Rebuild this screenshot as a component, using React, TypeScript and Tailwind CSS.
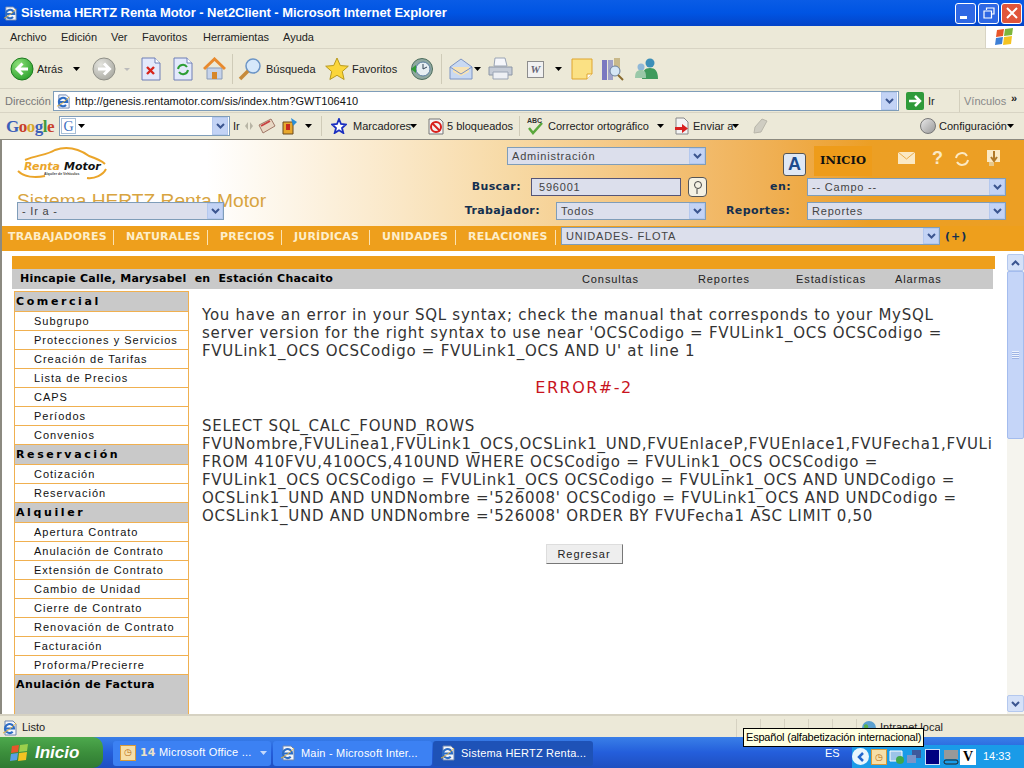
import React from "react";

const Caret = ({ c = "" }: { c?: string }) => (
  <svg width="7" height="4" viewBox="0 0 7 4" className={c}><path d="M0 0h7L3.5 4z" fill="#000" /></svg>
);

const Chevron = () => (
  <span className="flex h-full w-[16px] shrink-0 items-center justify-center border border-[#b4c8ee] bg-[#c3d3f5]">
    <svg width="9" height="7" viewBox="0 0 9 7"><path d="M1 1l3.500 3.500L8 1" stroke="#3b5590" strokeWidth="2" fill="none" /></svg>
  </span>
);

const Select = ({ label, w }: { label: string; w: string }) => (
  <div className={`${w} flex h-[18px] shrink-0 items-center border border-[#7f9db9] bg-[#dcdfec] text-[11px] tracking-[0.8px] text-[#444]`}>
    <span className="flex-1 truncate pl-[4px] font-['Liberation_Sans']">{label}</span>
    <Chevron />
  </div>
);

const IEIcon = ({ s = 16 }: { s?: number }) => (
  <svg width={s} height={s} viewBox="0 0 16 16">
    <path d="M3 1h8l3 3v11H3z" fill="#f4f6fb" stroke="#6f86b0" />
    <path d="M2.500 8.500h9.500a4.500 4.500 0 1 0-1.300 3.200" fill="none" stroke="#2c6cc4" strokeWidth="2.200" />
    <path d="M1 13C4 12 11 7 14 3" stroke="#e3b23c" strokeWidth="1" fill="none" />
  </svg>
);

const Round = ({ id, from, to, edge, dim = false }: { id: string; from: string; to: string; edge: string; dim?: boolean }) => (
  <svg width="24" height="24" viewBox="0 0 24 24">
    <defs>
      <radialGradient id={id} cx="0.35" cy="0.3" r="0.85"><stop offset="0" stopColor={from} /><stop offset="1" stopColor={to} /></radialGradient>
    </defs>
    <circle cx="12" cy="12" r="11" fill={`url(#${id})`} stroke={edge} />
    <path d={dim ? "M6 12h10M12 6.500l5.500 5.500-5.500 5.500" : "M18 12H8M12.500 6.500L7 12l5.500 5.500"} stroke="#fff" strokeWidth="3" fill="none" />
  </svg>
);

const Doc = ({ children }: { children: React.ReactNode }) => (
  <svg width="20" height="24" viewBox="0 0 20 24">
    <path d="M1 1h13l5 5v17H1z" fill="#e3e9fb" stroke="#6f7fb5" />
    <path d="M14 1v5h5" fill="#fff" stroke="#6f7fb5" />
    {children}
  </svg>
);

function TitleBar() {
  return (
    <div className="flex h-[26px] shrink-0 items-center bg-gradient-to-b from-[#0a5ce6] via-[#0054e3] to-[#0344c8] pl-[3px] pr-[2px]">
      <IEIcon s={15} />
      <span className="ml-[3px] flex-1 font-['Liberation_Sans'] text-[13px] font-bold tracking-[-0.06px] text-white">
        Sistema HERTZ Renta Motor - Net2Client - Microsoft Internet Explorer
      </span>
      <div className="flex gap-[2px]">
        <span className="flex h-[21px] w-[21px] items-end justify-center rounded-[3px] border border-white bg-[#2f68e4] pb-[4px] pr-[5px]">
          <span className="h-[3px] w-[7px] bg-white" />
        </span>
        <span className="flex h-[21px] w-[21px] items-center justify-center rounded-[3px] border border-white bg-[#2f68e4]">
          <svg width="12" height="12" viewBox="0 0 12 12"><path d="M3.500 3V1h7.500v6H9M1 4h7.500v7H1z" stroke="#fff" strokeWidth="1.200" fill="none" /></svg>
        </span>
        <span className="flex h-[21px] w-[21px] items-center justify-center rounded-[3px] border border-white bg-[#e0553a]">
          <svg width="12" height="12" viewBox="0 0 12 12"><path d="M1 1l10 10M11 1L1 11" stroke="#fff" strokeWidth="2" /></svg>
        </span>
      </div>
    </div>
  );
}

function MenuBar() {
  return (
    <div className="flex h-[23px] shrink-0 items-center justify-between border-b border-[#d8d4c4] bg-[#ece9d8] pl-[10px] font-['Liberation_Sans'] text-[11px] text-[#222]">
      <div className="flex">
        <span className="w-[51px]">Archivo</span>
        <span className="w-[50px]">Edición</span>
        <span className="w-[31px]">Ver</span>
        <span className="w-[61px]">Favoritos</span>
        <span className="w-[80px]">Herramientas</span>
        <span>Ayuda</span>
      </div>
      <div className="flex h-full w-[39px] items-center justify-center border-l border-[#d8d4c4] bg-white">
        <svg width="20" height="18" viewBox="0 0 20 18">
          <path d="M2 2l7-1-1 7-7 1z" fill="#e8562a" />
          <path d="M10 1l8-1-1 7-8 1z" fill="#7cb53c" />
          <path d="M1 10l7-1-1 7-7 1z" fill="#3d7fd6" />
          <path d="M9 9l8-1-1 8-8 1z" fill="#f4c322" />
        </svg>
      </div>
    </div>
  );
}

function ToolBar() {
  return (
    <div className="flex h-[40px] shrink-0 items-center whitespace-nowrap border-b border-[#d8d4c4] bg-[#ece9d8] pl-[10px] pt-[1px] font-['Liberation_Sans'] text-[11px] text-[#222]">
      <Round id="g1" from="#8fe07a" to="#1f9a24" edge="#1f7a20" />
      <span className="ml-[3px] w-[27px]">Atrás</span>
      <Caret c="ml-[9px]" />
      <span className="ml-[12px] flex"><Round id="g2" from="#e4e4de" to="#a4a49c" edge="#909088" dim /></span>
      <svg className="ml-[8px]" width="6" height="3" viewBox="0 0 6 3"><path d="M0 0h6L3 3z" fill="#bbb" /></svg>
      <span className="ml-[11px] flex">
        <Doc><path d="M6 10l7 7M13 10l-7 7" stroke="#d8261c" strokeWidth="2.400" /></Doc>
      </span>
      <span className="ml-[12px] flex">
        <Doc><path d="M5 12a5 5 0 0 1 9-2M15 13a5 5 0 0 1-9 2" stroke="#2c9e35" strokeWidth="2" fill="none" /></Doc>
      </span>
      <svg className="ml-[10px]" width="23" height="24" viewBox="0 0 23 24">
        <path d="M4 11h15v11H4z" fill="#c6d3ea" stroke="#8a9bb8" />
        <path d="M1 12L11.500 2 22 12" stroke="#e88a2e" strokeWidth="3" fill="none" />
        <path d="M9 15h5v7H9z" fill="#d6862a" />
      </svg>
      <span className="ml-[6px] h-[30px] w-px bg-[#cfcbb8]" />
      <svg className="ml-[5px]" width="25" height="24" viewBox="0 0 25 24">
        <circle cx="15" cy="9" r="7" fill="#d6e8fa" stroke="#6c95c6" strokeWidth="1.500" />
        <path d="M10 14L2 22" stroke="#c68a3a" strokeWidth="3.500" />
      </svg>
      <span className="ml-[3px] w-[48px]">Búsqueda</span>
      <svg className="ml-[11px]" width="24" height="24" viewBox="0 0 24 24">
        <path d="M12 1l3.300 7.500 8 .7-6 5.300 1.800 8L12 18.300 4.900 22.500l1.800-8-6-5.300 8-.7z" fill="#fbd63a" stroke="#b89a1e" />
      </svg>
      <span className="ml-[3px] w-[46px]">Favoritos</span>
      <svg className="ml-[12px]" width="24" height="24" viewBox="0 0 24 24">
        <circle cx="12" cy="12" r="10.500" fill="#8fa8a0" stroke="#4e6e5e" />
        <circle cx="13" cy="12" r="7" fill="#e6eef2" stroke="#5b7ea0" />
        <path d="M13 7v5l4-2" stroke="#345" fill="none" />
        <path d="M1 12l5-4v8z" fill="#2f9a36" />
      </svg>
      <span className="ml-[7px] h-[30px] w-px bg-[#cfcbb8]" />
      <svg className="ml-[7px]" width="24" height="22" viewBox="0 0 24 22">
        <path d="M1 9L12 1l11 8v12H1z" fill="#c9d9f2" stroke="#7d94c4" />
        <path d="M4 9h16v5l-8 4-8-4z" fill="#f7e3b5" />
        <path d="M1 9l11 7 11-7" stroke="#7d94c4" fill="none" />
      </svg>
      <Caret c="ml-[1px]" />
      <svg className="ml-[7px]" width="25" height="24" viewBox="0 0 25 24">
        <path d="M7 1h10l2 8H6z" fill="#f6f7fb" stroke="#9aa4b4" />
        <path d="M1 10h23v8H1z" fill="#c6ccd6" stroke="#8c96a6" />
        <path d="M5 15h15v7H5z" fill="#eef0f4" stroke="#9aa4b4" />
      </svg>
      <span className="ml-[14px] flex h-[17px] w-[17px] items-center justify-center border border-[#8d8d8d] bg-[#f1f1f1] font-['Liberation_Serif'] text-[11px] font-bold italic text-[#667]">W</span>
      <Caret c="ml-[11px]" />
      <svg className="ml-[9px]" width="22" height="22" viewBox="0 0 22 22">
        <path d="M1 1h20v15l-5 5H1z" fill="#fbe184" stroke="#dfa52e" />
        <path d="M16 21v-5h5" fill="#fff" stroke="#dfa52e" />
      </svg>
      <svg className="ml-[8px]" width="23" height="24" viewBox="0 0 23 24">
        <path d="M1 3h5v20H1z" fill="#7b78c0" />
        <path d="M7 3h5v20H7z" fill="#9ea0c8" />
        <path d="M13 1h6v14h-6z" fill="#c9b98a" />
        <circle cx="14" cy="14" r="5" fill="#d5e6f6" stroke="#6a7f9c" />
        <path d="M17 18l5 5" stroke="#8a6a2e" strokeWidth="2" />
      </svg>
      <svg className="ml-[9px]" width="26" height="23" viewBox="0 0 26 23">
        <circle cx="17" cy="5" r="4.500" fill="#3d8fb8" />
        <path d="M9 21c0-8 3-11 8-11s8 3 8 11z" fill="#3f9a5c" />
        <circle cx="8" cy="9" r="3.500" fill="#8fb8d8" />
        <path d="M2 20c0-6 2-8 6-8s5 2 5 8z" fill="#9ac8a8" />
      </svg>
    </div>
  );
}

function AddressBar() {
  return (
    <div className="flex h-[24px] shrink-0 items-center whitespace-nowrap border-b border-[#d8d4c4] bg-[#ece9d8] pl-[5px] pt-[1px] font-['Liberation_Sans'] text-[11px] text-[#222]">
      <span className="w-[48px] text-[#777]">Dirección</span>
      <div className="flex h-[20px] w-[846px] items-center border border-[#7f9db9] bg-white pl-[2px] pr-px">
        <IEIcon s={15} />
        <span className="ml-[4px] flex-1 text-[11px] tracking-[0.05px] text-[#111]">http://genesis.rentamotor.com/sis/index.htm?GWT106410</span>
        <Chevron />
      </div>
      <span className="ml-[7px] flex h-[18px] w-[18px] items-center justify-center rounded-[2px] bg-[#2f9a3a]">
        <svg width="14" height="12" viewBox="0 0 14 12"><path d="M1 6h10M7 1l5 5-5 5" stroke="#fff" strokeWidth="2.500" fill="none" /></svg>
      </span>
      <span className="ml-[4px] w-[9px]">Ir</span>
      <span className="ml-[22px] h-[22px] w-px bg-[#d3cfbd]" />
      <span className="ml-[4px] w-[38px] text-[#888]">Vínculos</span>
      <span className="ml-[9px] -mt-[6px] font-bold leading-none">»</span>
    </div>
  );
}

function GoogleBar() {
  return (
    <div className="flex h-[26px] shrink-0 items-center whitespace-nowrap bg-[#ece9d8] pl-[6px] font-['Liberation_Sans'] text-[11px] text-[#222]">
      <span className="w-[49px] font-['Liberation_Serif'] text-[17px] font-bold leading-none tracking-[-0.5px]">
        <span className="text-[#3b5fb8]">G</span><span className="text-[#c8402a]">o</span><span className="text-[#d8a82a]">o</span><span className="text-[#3b5fb8]">g</span><span className="text-[#3f9a3c]">l</span><span className="text-[#c8402a]">e</span>
      </span>
      <div className="ml-[4px] flex h-[20px] w-[171px] items-center border border-[#7f9db9] bg-white pl-px pr-px">
        <span className="flex h-[16px] w-[15px] items-center justify-center border border-[#a8c0d8] font-['Liberation_Serif'] text-[14px] text-[#3b6fc0]">G</span>
        <Caret c="ml-[2px]" />
        <span className="flex-1" />
        <Chevron />
      </div>
      <span className="ml-[3px] w-[8px]">Ir</span>
      <svg className="ml-[4px]" width="8" height="8" viewBox="0 0 8 8"><path d="M3 0L0 4l3 4zM5 0l3 4-3 4z" fill="#b8b5a5" /></svg>
      <svg className="ml-[5px]" width="18" height="16" viewBox="0 0 18 16">
        <path d="M1 7l12-6 4 7-12 7z" fill="#e8d8c4" stroke="#a07868" />
        <path d="M3 8l9-5" stroke="#c84040" strokeWidth="2" />
      </svg>
      <svg className="ml-[6px]" width="16" height="18" viewBox="0 0 16 18">
        <path d="M1 5h10v12H1z" fill="#e8a82e" stroke="#6a4a1e" />
        <path d="M4 7h4v6H4z" fill="#c8281e" />
        <path d="M9 1l6 4-4 4z" fill="#2a8fd8" />
      </svg>
      <Caret c="ml-[7px]" />
      <span className="ml-[9px] h-[20px] w-px bg-[#cfcbb8]" />
      <svg className="ml-[9px]" width="16" height="16" viewBox="0 0 16 16">
        <path d="M8 1l2 5 5 .5-4 3.500 1.300 5L8 12.300 3.700 15 5 10 1 6.500 6 6z" fill="#fff" stroke="#1a2fc0" strokeWidth="1.800" />
      </svg>
      <span className="ml-[6px] w-[57px]">Marcadores</span>
      <Caret />
      <svg className="ml-[11px]" width="16" height="17" viewBox="0 0 16 17">
        <path d="M1 1h11l3 3v12H1z" fill="#f4f4f4" stroke="#777" />
        <circle cx="8" cy="9" r="5" fill="none" stroke="#d8201c" strokeWidth="2" />
        <path d="M4 5l8 8" stroke="#d8201c" strokeWidth="2" />
      </svg>
      <span className="ml-[3px] w-[64px]">5 bloqueados</span>
      <span className="ml-[8px] h-[20px] w-px bg-[#cfcbb8]" />
      <span className="relative ml-[7px] flex h-[18px] w-[17px] items-center justify-center">
        <svg width="17" height="18" viewBox="0 0 17 18"><path d="M2 11l4 5 9-10" stroke="#5aa83c" strokeWidth="2.500" fill="none" /></svg>
        <span className="absolute left-0 top-[-1px] text-[7px] font-bold text-[#333]">ABC</span>
      </span>
      <span className="ml-[4px] w-[101px]">Corrector ortográfico</span>
      <Caret c="ml-[8px]" />
      <svg className="ml-[10px]" width="16" height="18" viewBox="0 0 16 18">
        <path d="M2 1h8l4 4v12H2z" fill="#f4f4f4" stroke="#888" />
        <path d="M1 10h7V7l6 4.500L8 16v-3H1z" fill="#d82020" />
      </svg>
      <span className="ml-[3px] w-[39px]">Enviar a</span>
      <Caret />
      <svg className="ml-[13px]" width="16" height="16" viewBox="0 0 16 16"><path d="M10 1l5 2-6 11-7 1 1-6z" fill="#cfcdc2" stroke="#b8b6aa" /></svg>
      <span className="flex-1" />
      <span className="h-[16px] w-[16px] rounded-full border border-[#777] bg-gradient-to-br from-[#e8e8e8] to-[#9a9a9a]" />
      <span className="ml-[3px] w-[67px]">Configuración</span>
      <Caret c="ml-px mr-[10px]" />
    </div>
  );
}

const HeadLabel = ({ w, children }: { w: string; children: React.ReactNode }) => (
  <span className={`${w} shrink-0 text-right font-['DejaVu_Sans'] text-[11px] font-bold tracking-[0.4px] text-[#15304f]`}>{children}</span>
);

function Header() {
  return (
    <div className="flex h-[86px] shrink-0 bg-gradient-to-r from-white from-[20%] via-[#f7d9a4] via-[50%] to-[#ec9f24] to-[85%]">
      <div className="relative w-[458px] shrink-0 pl-[15px] pt-[7px]">
        <svg width="92" height="34" viewBox="0 0 92 34" className="block">
          <path d="M8 13C20 8 30 8 38 3 50-1 62 2 72 9c6 2 12 4 16 8" fill="none" stroke="#eba52a" strokeWidth="2" />
          <path d="M1 24c6 6 17 7 27 5M70 31c8 1 16-3 19-9" fill="none" stroke="#eba52a" strokeWidth="2" />
          <text x="7" y="23" fontFamily="DejaVu Sans" fontSize="11" fontWeight="bold" fontStyle="italic" fill="#eba52a">Renta</text>
          <text x="47" y="23" fontFamily="DejaVu Sans" fontSize="11" fontWeight="bold" fontStyle="italic" fill="#111">Motor</text>
          <text x="27" y="28" fontFamily="Liberation Sans" fontSize="3.500" fontWeight="bold" fill="#444">Alquiler de Vehículos</text>
        </svg>
        <div className="mt-[9px] font-['Liberation_Sans'] text-[19.200px] leading-[22px] text-[#d8a440]">Sistema HERTZ Renta Motor</div>
        <div className="absolute left-[15px] top-[62px]">
          <Select label="- Ir a -" w="w-[207px]" />
        </div>
      </div>
      <div className="flex flex-1 flex-col">
        <div className="flex h-[37px] items-start">
          <div className="ml-[47px] mt-[7px]"><Select label="Administración" w="w-[199px]" /></div>
          <span className="ml-[77px] mt-[13px] flex h-[23px] w-[23px] items-center justify-center rounded-[3px] border border-[#555] bg-[#dfe8f6] font-['Liberation_Sans'] text-[18px] font-bold text-[#1c4a8c]">A</span>
          <span className="ml-[8px] mt-[6px] flex h-[30px] w-[58px] items-center justify-center bg-[#ee9c1a] font-['DejaVu_Serif'] text-[11.500px] font-bold text-[#111]">INICIO</span>
          <svg className="ml-[26px] mt-[12px]" width="17" height="12" viewBox="0 0 17 12"><path d="M0 0h17v12H0z" fill="#fbe9c4" /><path d="M0 0l8.500 7L17 0" stroke="#ecac4a" fill="none" /></svg>
          <span className="ml-[17px] mt-[7px] font-['Liberation_Sans'] text-[18px] font-bold leading-[22px] text-[#fbe9c4]">?</span>
          <svg className="ml-[11px] mt-[11px]" width="16" height="16" viewBox="0 0 16 16"><path d="M2 7a6 6 0 0 1 11-2M14 9a6 6 0 0 1-11 2" stroke="#fbe9c4" strokeWidth="2" fill="none" /></svg>
          <svg className="ml-[16px] mt-[9px]" width="15" height="18" viewBox="0 0 15 18"><path d="M1 1h13v12H1z" fill="#fbe9c4" /><path d="M8 2v9M5 8l3 4 3-4" stroke="#b07828" strokeWidth="2" fill="none" /><path d="M3 13h5v4H3z" fill="#e8c88a" /></svg>
        </div>
        <div className="flex h-[20px] items-center">
          <HeadLabel w="w-[61px]">Buscar:</HeadLabel>
          <div className="ml-[10px] flex h-[18px] w-[150px] items-center border border-[#555577] bg-[#dcdfec] pl-[7px] font-['Liberation_Sans'] text-[11px] tracking-[0.8px] text-[#444]">596001</div>
          <span className="ml-[7px] flex h-[20px] w-[19px] items-center justify-center rounded-[4px] border border-[#555] bg-[#f4f1e4]">
            <svg width="11" height="15" viewBox="0 0 11 15"><circle cx="6" cy="5" r="3.500" fill="none" stroke="#444" /><path d="M5 9v5" stroke="#444" /></svg>
          </span>
          <HeadLabel w="w-[84px]">en:</HeadLabel>
          <div className="ml-[16px]"><Select label="-- Campo --" w="w-[199px]" /></div>
        </div>
        <div className="mt-[4px] flex h-[20px] items-center">
          <HeadLabel w="w-[80px]">Trabajador:</HeadLabel>
          <div className="ml-[16px]"><Select label="Todos" w="w-[150px]" /></div>
          <HeadLabel w="w-[84px]">Reportes:</HeadLabel>
          <div className="ml-[17px]"><Select label="Reportes" w="w-[199px]" /></div>
        </div>
      </div>
    </div>
  );
}

const NavItem = ({ t, w, p = "pl-[12px]" }: { t: string; w: string; p?: string }) => (
  <span className={`${w} ${p} mt-[2px] flex h-[15px] shrink-0 items-center border-r border-[#fbe3b4] font-['DejaVu_Sans'] text-[11px] font-bold tracking-[0.2px] text-[#fdeecb]`}>{t}</span>
);

function NavBar() {
  return (
    <div className="flex h-[25px] shrink-0 items-center bg-[#ee9f1c] pb-[5px]">
      <NavItem t="TRABAJADORES" w="w-[112px]" p="pl-[6px]" />
      <NavItem t="NATURALES" w="w-[94px]" />
      <NavItem t="PRECIOS" w="w-[74px]" />
      <NavItem t="JURÍDICAS" w="w-[88px]" />
      <NavItem t="UNIDADES" w="w-[86px]" />
      <NavItem t="RELACIONES" w="w-[100px]" />
      <div className="ml-[5px]"><Select label="UNIDADES- FLOTA" w="w-[379px]" /></div>
      <span className="ml-[5px] mt-[2px] font-['DejaVu_Sans'] text-[11px] font-bold tracking-[1px] text-[#15304f]">(+)</span>
    </div>
  );
}

const SideHead = ({ t, c }: { t: string; c: string }) => (
  <div className={`flex h-[20px] items-center border-b border-[#f0b050] bg-[#c9c9c9] pl-[1px] pt-[1px] font-['DejaVu_Sans'] text-[11px] font-bold text-black ${c}`}>{t}</div>
);

const SideItem = ({ t }: { t: string }) => (
  <div className="flex h-[19px] items-center border-b border-[#f0b050] bg-white pl-[19px] font-['Liberation_Sans'] text-[11px] tracking-[1px] text-[#111]">{t}</div>
);

function Sidebar() {
  const a = ["Subgrupo", "Protecciones y Servicios", "Creación de Tarifas", "Lista de Precios", "CAPS", "Períodos", "Convenios"];
  const b = ["Cotización", "Reservación"];
  const c = ["Apertura Contrato", "Anulación de Contrato", "Extensión de Contrato", "Cambio de Unidad", "Cierre de Contrato", "Renovación de Contrato", "Facturación", "Proforma/Precierre"];
  return (
    <div className="ml-[12px] mt-[2px] flex w-[175px] shrink-0 flex-col border-x border-t border-[#f0b050]">
      <SideHead t="Comercial" c="tracking-[2.600px]" />
      {a.map((t) => <SideItem key={t} t={t} />)}
      <SideHead t="Reservación" c="tracking-[2.600px]" />
      {b.map((t) => <SideItem key={t} t={t} />)}
      <SideHead t="Alquiler" c="tracking-[2.600px]" />
      {c.map((t) => <SideItem key={t} t={t} />)}
      <div className="flex-1 bg-[#c9c9c9] pl-[1px] pt-[2px] font-['DejaVu_Sans'] text-[11px] font-bold tracking-[0.4px] text-black">Anulación de Factura</div>
    </div>
  );
}

function Content() {
  return (
    <div className="flex min-h-0 flex-1 bg-white">
      <div className="flex min-w-0 flex-1 flex-col pt-[5px]">
        <div className="ml-[10px] h-[13px] w-[983px] shrink-0 bg-[#ee9f1c]" />
        <div className="ml-[10px] flex h-[20px] w-[981px] shrink-0 items-center bg-[#c9c9c9] text-[11px]">
          <span className="ml-[8px] mt-[1px] w-[562px] font-['DejaVu_Sans'] font-bold tracking-[0.25px] text-black">Hincapie Calle, Marysabel&nbsp; en&nbsp; Estación Chacaito</span>
          <span className="w-[116px] font-['Liberation_Sans'] tracking-[0.9px] text-[#222]">Consultas</span>
          <span className="w-[98px] font-['Liberation_Sans'] tracking-[0.9px] text-[#222]">Reportes</span>
          <span className="w-[99px] font-['Liberation_Sans'] tracking-[0.9px] text-[#222]">Estadísticas</span>
          <span className="font-['Liberation_Sans'] tracking-[0.9px] text-[#222]">Alarmas</span>
        </div>
        <div className="flex min-h-0 flex-1">
          <Sidebar />
          <div className="ml-[13px] mt-[17px] w-[789px] font-['DejaVu_Sans'] text-[15px] leading-[18px] tracking-[0.74px] text-[#333]">
            <p className="whitespace-nowrap">You have an error in your SQL syntax; check the manual that corresponds to your MySQL<br />server version for the right syntax to use near 'OCSCodigo = FVULink1_OCS OCSCodigo =<br />FVULink1_OCS OCSCodigo = FVULink1_OCS AND U' at line 1</p>
            <p className="mt-[19px] w-[764px] text-center text-[16px] tracking-[1.500px] text-[#c8141e]">ERROR#-2</p>
            <p className="mt-[20px] whitespace-nowrap">SELECT SQL_CALC_FOUND_ROWS<br />FVUNombre,FVULinea1,FVULink1_OCS,OCSLink1_UND,FVUEnlaceP,FVUEnlace1,FVUFecha1,FVULi<br />FROM 410FVU,410OCS,410UND WHERE OCSCodigo = FVULink1_OCS OCSCodigo =<br />FVULink1_OCS OCSCodigo = FVULink1_OCS OCSCodigo = FVULink1_OCS AND UNDCodigo =<br />OCSLink1_UND AND UNDNombre ='526008' OCSCodigo = FVULink1_OCS AND UNDCodigo =<br />OCSLink1_UND AND UNDNombre ='526008' ORDER BY FVUFecha1 ASC LIMIT 0,50</p>
            <div className="mt-[19px] flex w-[764px] justify-center">
              <span className="flex h-[20px] w-[77px] items-center justify-center border border-t-[#ddd] border-l-[#ddd] border-r-[#777] border-b-[#777] bg-[#eeeeee] font-['Liberation_Sans'] text-[11px] tracking-[1px] text-[#222]">Regresar</span>
            </div>
          </div>
        </div>
      </div>
      <div className="mt-[3px] flex w-[17px] shrink-0 flex-col bg-[#f5f4ee]">
        <span className="flex h-[17px] items-center justify-center rounded-[2px] border border-[#b4c8ee] bg-[#d5e1f8]">
          <svg width="9" height="6" viewBox="0 0 9 6"><path d="M1 5l3.500-3.500L8 5" stroke="#3b5590" strokeWidth="2" fill="none" /></svg>
        </span>
        <span className="flex h-[168px] items-center justify-center rounded-[2px] border border-[#a4bcee] bg-[#c5d5f8]">
          <span className="h-[8px] w-[7px] bg-[repeating-linear-gradient(#eef3fd_0_1px,#9fb4e4_1px_2px)]" />
        </span>
        <span className="flex-1" />
        <span className="mb-[2px] flex h-[17px] items-center justify-center rounded-[2px] border border-[#b4c8ee] bg-[#d5e1f8]">
          <svg width="9" height="6" viewBox="0 0 9 6"><path d="M1 1l3.500 3.500L8 1" stroke="#3b5590" strokeWidth="2" fill="none" /></svg>
        </span>
      </div>
    </div>
  );
}

function StatusBar() {
  return (
    <div className="flex h-[23px] shrink-0 items-center border-t-2 border-[#d6d2c2] bg-[#ece9d8] pl-[2px] pt-[2px] font-['Liberation_Sans'] text-[11px] text-[#222]">
      <IEIcon s={16} />
      <span className="ml-[4px] w-[714px]">Listo</span>
      <span className="h-[18px] w-[24px] border-l border-[#d6d2c2]" />
      <span className="h-[18px] w-[24px] border-l border-[#d6d2c2]" />
      <span className="h-[18px] w-[24px] border-l border-[#d6d2c2]" />
      <span className="h-[18px] w-[24px] border-l border-[#d6d2c2]" />
      <span className="h-[18px] w-[24px] border-l border-[#d6d2c2]" />
      <span className="flex h-[18px] flex-1 items-center border-l border-[#d6d2c2] pl-[4px]">
        <svg width="16" height="16" viewBox="0 0 16 16"><circle cx="8" cy="8" r="7" fill="#5aa0d0" /><path d="M3 5c3-2 5 1 4 3s-3 2-3 5" fill="#5ab04a" /></svg>
        <span className="ml-[3px]">Intranet local</span>
      </span>
    </div>
  );
}

const TaskBtn = ({ w, c, children }: { w: string; c: string; children: React.ReactNode }) => (
  <div className={`${w} ${c} mt-[1px] flex h-[25px] shrink-0 items-center rounded-[3px] pl-[7px] font-['Liberation_Sans'] text-[11px] tracking-[0.2px] text-white`}>{children}</div>
);

function TaskBar() {
  return (
    <div className="relative flex h-[31px] shrink-0 items-center bg-gradient-to-b from-[#3a7fe8] via-[#245edb] to-[#1f4fc0]">
      <div className="flex h-full w-[103px] items-center rounded-r-[10px] bg-gradient-to-b from-[#4da94d] via-[#3c8f3c] to-[#2f7a32] pl-[10px]">
        <svg width="20" height="18" viewBox="0 0 20 18">
          <path d="M2 2l7-1-1 7-7 1z" fill="#e8562a" /><path d="M10 1l8-1-1 7-8 1z" fill="#9cd04c" />
          <path d="M1 10l7-1-1 7-7 1z" fill="#5a9fe6" /><path d="M9 9l8-1-1 8-8 1z" fill="#f4c322" />
        </svg>
        <span className="ml-[5px] font-['Liberation_Sans'] text-[17px] font-bold italic text-white">Inicio</span>
      </div>
      <TaskBtn w="w-[158px] ml-[10px]" c="bg-[#3c81f3]">
        <span className="flex h-[16px] w-[16px] items-center justify-center border border-[#d89a3a] bg-[#f6dfa8] text-[9px] text-[#b86a10]">◷</span>
        <span className="ml-[4px] flex-1"><b className="font-['DejaVu_Sans'] text-[#e8e0c8]">14</b> Microsoft Office ...</span>
        <Caret c="mr-[4px] invert opacity-70" />
      </TaskBtn>
      <TaskBtn w="w-[159px] ml-[2px]" c="bg-[#3c81f3]"><IEIcon s={16} /><span className="ml-[5px]">Main - Microsoft Inter...</span></TaskBtn>
      <TaskBtn w="w-[160px] ml-px" c="bg-[#1e52b7]"><IEIcon s={16} /><span className="ml-[5px]">Sistema HERTZ Renta...</span></TaskBtn>
      <span className="ml-[232px] mt-[1px] w-[14px] font-['Liberation_Sans'] text-[11px] text-white">ES</span>
      <div className="ml-[13px] mt-[8px] flex h-[23px] flex-1 items-center bg-[#1a9be8]">
        <span className="flex h-[17px] w-[17px] items-center justify-center rounded-full bg-white/90 text-[#2266cc]">
          <svg width="8" height="10" viewBox="0 0 8 10"><path d="M6 1L2 5l4 4" stroke="#2266cc" strokeWidth="2.500" fill="none" /></svg>
        </span>
        <span className="ml-[2px] flex h-[16px] w-[16px] items-center justify-center border border-[#d89a3a] bg-[#f6dfa8] text-[9px] text-[#b86a10]">◷</span>
        <svg className="ml-[2px]" width="16" height="16" viewBox="0 0 16 16"><path d="M1 2h12v10H1z" fill="#9cc4e8" stroke="#fff" /><circle cx="11" cy="11" r="4" fill="#3fa84a" /></svg>
        <svg className="ml-px" width="16" height="16" viewBox="0 0 16 16"><path d="M6 1h9v8H6z" fill="#3d5a9c" /><path d="M1 6h9v8H1z" fill="#7a94c8" /></svg>
        <span className="ml-[3px] h-[16px] w-[15px] border border-[#cfe0f8] bg-[#000080]" />
        <svg className="ml-[3px]" width="16" height="16" viewBox="0 0 16 16"><path d="M1 1h14v9H1z" fill="#999" /><rect x="1" y="11" width="14" height="4" rx="2" fill="none" stroke="#222" /></svg>
        <span className="ml-px flex h-[16px] w-[16px] items-center justify-center bg-white font-['Liberation_Serif'] text-[14px] font-bold text-black">V</span>
        <span className="ml-[7px] font-['Liberation_Sans'] text-[11px] text-white">14:33</span>
      </div>
      <div className="absolute left-[743px] top-[-9px] flex h-[19px] items-center whitespace-nowrap border border-black bg-[#ffffe1] px-[2px] font-['Liberation_Sans'] text-[11px] tracking-[-0.2px] text-black">Español (alfabetización internacional)</div>
    </div>
  );
}

export default function App() {
  return (
    <div className="flex h-[768px] w-[1024px] flex-col overflow-hidden bg-[#ece9d8]">
      <TitleBar />
      <MenuBar />
      <ToolBar />
      <AddressBar />
      <GoogleBar />
      <div className="flex min-h-0 flex-1 flex-col border-l-2 border-t border-[#8c8a80]">
        <Header />
        <NavBar />
        <Content />
      </div>
      <StatusBar />
      <TaskBar />
    </div>
  );
}
